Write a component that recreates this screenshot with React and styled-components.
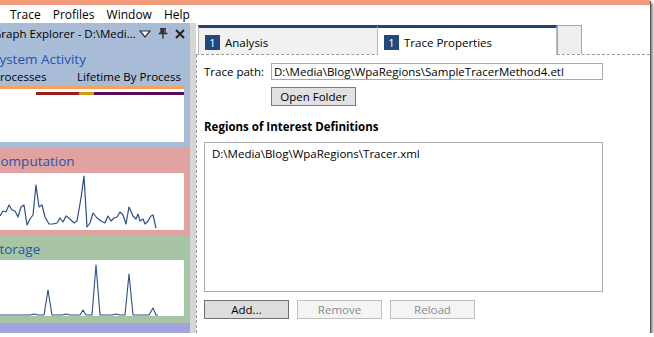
import React from 'react';
import styled, { createGlobalStyle } from 'styled-components';

const GlobalStyle = createGlobalStyle`
  html, body {
    margin: 0;
    padding: 0;
    background: #ffffff;
    overflow: hidden;
  }
  body {
    font-family: 'Open Sans', 'Noto Sans', sans-serif;
    font-size: 11.5px;
    color: #000;
  }
`;

const computation = [
  [0, 43], [3, 38], [6, 39], [9, 32], [12, 37], [15, 38], [18, 44], [21, 34], [24, 32],
  [27, 52], [30, 46], [33, 42], [36, 12], [39, 34], [42, 32], [45, 44], [49, 51], [53, 51],
  [57, 50], [60, 45], [63, 49], [66, 43], [70, 46], [74, 50], [77, 48], [81, 25], [84, 3],
  [87, 54], [90, 50], [93, 40], [97, 45], [101, 48], [105, 50], [108, 43], [111, 48],
  [114, 45], [117, 44], [120, 39], [123, 42], [126, 51], [129, 34], [133, 43], [136, 46],
  [138, 41], [140, 48], [143, 46], [145, 51], [148, 48], [151, 43], [153, 42], [156, 55]
];

const storage = [
  [0, 55], [30, 55], [34, 54], [38, 55], [44, 55], [48, 30], [52, 55], [62, 55], [66, 54],
  [70, 55], [80, 55], [83, 50], [86, 55], [92, 55], [96, 5], [100, 55], [112, 55], [116, 54],
  [120, 55], [125, 55], [129, 14], [133, 55], [149, 55], [153, 48], [156, 55], [158, 55]
];

function toPoints(list) {
  return list.map(([x, y]) => `${x},${y}`).join(' ');
}

function App() {
  return (
    <>
      <GlobalStyle />
      <Window>
        <TitleStrip />
        <MenuBar>
          <MenuItem>Trace</MenuItem>
          <MenuItem>Profiles</MenuItem>
          <MenuItem>Window</MenuItem>
          <MenuItem>Help</MenuItem>
        </MenuBar>
        <Body>
          <LeftPanel>
            <PanelHeader>
              <HeaderTitle>Graph Explorer - D:\Medi...</HeaderTitle>
              <HeaderIcons>
                <svg width="12" height="8" viewBox="0 0 12 8">
                  <path d="M1 1 L11 1 L6 7 Z" fill="#fff" stroke="#333" strokeWidth="1.2" />
                </svg>
                <svg width="10" height="11" viewBox="0 0 10 11">
                  <path d="M2 0.5 H8 M3 0.5 V5 M7 0.5 V5 M0.5 5.5 H9.5 M5 5.5 V10.5" stroke="#333" strokeWidth="1.4" fill="none" />
                  <rect x="3" y="1" width="3" height="4" fill="#333" />
                </svg>
                <svg width="10" height="10" viewBox="0 0 10 10">
                  <path d="M1 1 L9 9 M9 1 L1 9" stroke="#222" strokeWidth="2" />
                </svg>
              </HeaderIcons>
            </PanelHeader>
            <Section $bg="#a8bcd8" $height={103}>
              <SectionTitle $top={6}>System Activity</SectionTitle>
              <SubRow>
                <span>Processes</span>
                <span>Lifetime By Process</span>
              </SubRow>
              <ChartBox $top={2}>
                <svg width="184" height="56" viewBox="0 0 184 56">
                  <rect x="0" y="0" width="184" height="3" fill="#f5a05c" />
                  <rect x="36" y="6" width="43" height="3" fill="#9e1b1f" />
                  <rect x="79" y="6" width="2" height="3" fill="#e08a2a" />
                  <rect x="81" y="6" width="13" height="3" fill="#c9a106" />
                  <rect x="94" y="6" width="90" height="3" fill="#5b0a57" />
                </svg>
              </ChartBox>
            </Section>
            <Section $bg="#e1a2a2" $height={88}>
              <SectionTitle $top={5}>Computation</SectionTitle>
              <ChartBox $top={3}>
                <svg width="184" height="57" viewBox="0 0 184 57">
                  <polyline points={toPoints(computation)} fill="none" stroke="#2c4f86" strokeWidth="1.2" strokeLinejoin="round" />
                </svg>
              </ChartBox>
            </Section>
            <Section $bg="#a7c5a5" $height={88}>
              <SectionTitle $top={5}>Storage</SectionTitle>
              <ChartBox $top={2}>
                <svg width="184" height="56" viewBox="0 0 184 56">
                  <polyline points={toPoints(storage)} fill="none" stroke="#2c4f86" strokeWidth="1.1" strokeLinejoin="round" />
                </svg>
              </ChartBox>
            </Section>
            <Section $bg="#a3a3e0" $height={10} />
          </LeftPanel>
          <Splitter />
          <RightPanel>
            <TabStrip>
              <Tab>
                <Badge>1</Badge>
                Analysis
              </Tab>
              <Tab $active>
                <Badge>1</Badge>
                Trace Properties
              </Tab>
              <SpareTab />
            </TabStrip>
            <Content>
              <PathRow>
                <Label>Trace path:</Label>
                <PathInput>D:\Media\Blog\WpaRegions\SampleTracerMethod4.etl</PathInput>
              </PathRow>
              <OpenButton>Open Folder</OpenButton>
              <Heading>Regions of Interest Definitions</Heading>
              <ListBox>D:\Media\Blog\WpaRegions\Tracer.xml</ListBox>
              <ButtonRow>
                <Button $pressed>Add...</Button>
                <Button disabled>Remove</Button>
                <Button disabled>Reload</Button>
              </ButtonRow>
            </Content>
          </RightPanel>
        </Body>
      </Window>
    </>
  );
}

const Window = styled.div`
  width: 650px;
  height: 333px;
  display: flex;
  flex-direction: column;
  background: #ffffff;
  overflow: hidden;
  box-shadow: 1px 1px 0 #555, 3px 3px 2px rgba(0, 0, 0, 0.45);
`;

const TitleStrip = styled.div`
  height: 5px;
  background: #f29b7b;
  flex-shrink: 0;
`;

const MenuBar = styled.div`
  height: 18px;
  display: flex;
  align-items: center;
  padding-left: 4px;
  flex-shrink: 0;
`;

const MenuItem = styled.span`
  padding: 0 6px;
  font-size: 12px;
`;

const Body = styled.div`
  flex: 1;
  display: flex;
  min-height: 0;
`;

const LeftPanel = styled.div`
  width: 190px;
  display: flex;
  flex-direction: column;
  overflow: hidden;
  flex-shrink: 0;
`;

const PanelHeader = styled.div`
  height: 23px;
  background: #a9bcd6;
  display: flex;
  align-items: center;
  justify-content: space-between;
  padding-right: 5px;
`;

const HeaderTitle = styled.span`
  margin-left: -7px;
  white-space: nowrap;
  font-size: 11.5px;
`;

const HeaderIcons = styled.div`
  display: flex;
  align-items: center;
  gap: 7px;
`;

const Section = styled.div`
  height: ${p => p.$height}px;
  background: ${p => p.$bg};
  display: flex;
  flex-direction: column;
  flex-shrink: 0;
`;

const SectionTitle = styled.div`
  margin-left: -8px;
  margin-top: ${p => p.$top}px;
  font-size: 13.5px;
  line-height: 18px;
  color: #2555aa;
  white-space: nowrap;
`;

const SubRow = styled.div`
  display: flex;
  justify-content: space-between;
  width: 188px;
  margin-left: -7px;
  margin-top: 1px;
  font-size: 11.5px;
  line-height: 15px;
`;

const ChartBox = styled.div`
  width: 184px;
  margin-top: ${p => p.$top}px;
  background: #ffffff;
  line-height: 0;
  svg {
    display: block;
  }
`;

const Splitter = styled.div`
  width: 6px;
  background: #d6d6d6;
  flex-shrink: 0;
`;

const RightPanel = styled.div`
  flex: 1;
  display: flex;
  flex-direction: column;
  padding-top: 2px;
`;

const TabStrip = styled.div`
  height: 29px;
  display: flex;
  padding-left: 2px;
  border-bottom: 1px dashed #9c9c9c;
  flex-shrink: 0;
`;

const Tab = styled.div`
  width: 180px;
  box-sizing: border-box;
  display: flex;
  align-items: center;
  gap: 5px;
  padding-left: 6px;
  padding-top: 2px;
  font-size: 11.5px;
  border-top: 3px solid #23436e;
  border-left: 1px solid #b8b8b8;
  border-right: 1px solid #b8b8b8;
  background: ${p => (p.$active ? '#ffffff' : '#f1f1f1')};
  margin-bottom: ${p => (p.$active ? '-1px' : '0')};
  margin-left: ${p => (p.$active ? '-1px' : '0')};
`;

const SpareTab = styled.div`
  width: 25px;
  box-sizing: border-box;
  background: #eeeeee;
  border: 1px solid #a8a8a8;
  border-bottom: none;
`;

const Badge = styled.span`
  width: 15px;
  height: 15px;
  background: #214a7c;
  color: #ffffff;
  display: inline-flex;
  align-items: center;
  justify-content: center;
  font-size: 11px;
`;

const Content = styled.div`
  flex: 1;
  border-left: 1px dashed #9c9c9c;
  padding: 8px 0 0 7px;
  display: flex;
  flex-direction: column;
  align-items: flex-start;
`;

const PathRow = styled.div`
  display: flex;
  align-items: center;
`;

const Label = styled.span`
  width: 67px;
  font-size: 11.5px;
`;

const PathInput = styled.div`
  width: 332px;
  height: 17px;
  box-sizing: border-box;
  border: 1px solid #a9a9a9;
  padding-left: 2px;
  font-size: 11.5px;
  line-height: 15px;
  white-space: nowrap;
`;

const OpenButton = styled.div`
  margin: 7px 0 0 67px;
  width: 85px;
  height: 19px;
  box-sizing: border-box;
  border: 1px solid #7a7a7a;
  background: #e1e1e1;
  font-size: 11.5px;
  display: flex;
  align-items: center;
  justify-content: center;
`;

const Heading = styled.div`
  margin-top: 13px;
  font-weight: bold;
  font-size: 11.5px;
  line-height: 16px;
`;

const ListBox = styled.div`
  margin-top: 7px;
  width: 399px;
  height: 150px;
  box-sizing: border-box;
  border: 1px solid #acacac;
  padding: 3px 7px;
  font-size: 11.5px;
`;

const ButtonRow = styled.div`
  margin-top: 8px;
  display: flex;
  gap: 8px;
`;

const Button = styled.button`
  width: 85px;
  height: 19px;
  padding: 0;
  font-family: inherit;
  font-size: 11.5px;
  border: 1px solid ${p => (p.disabled ? '#bfbfbf' : '#707070')};
  background: ${p => (p.disabled ? '#f4f4f4' : p.$pressed ? '#dddddd' : '#e1e1e1')};
  color: ${p => (p.disabled ? '#8a8a8a' : '#000')};
`;

export default App;
